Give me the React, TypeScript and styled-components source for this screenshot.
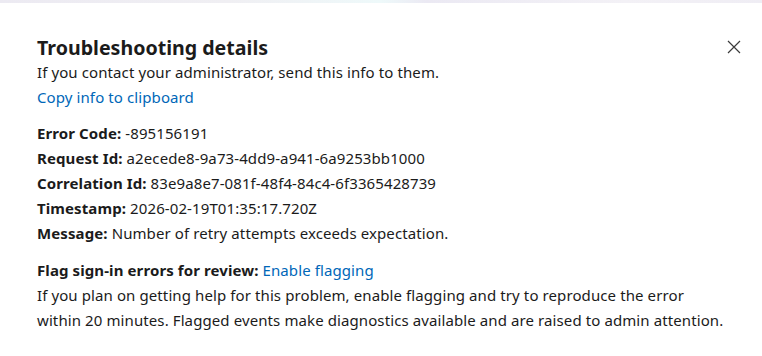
import * as React from 'react';
import styled, { createGlobalStyle } from 'styled-components';

const GlobalStyle = createGlobalStyle`
  html, body {
    margin: 0;
    padding: 0;
    background: #ffffff;
  }
  body {
    font-family: "Noto Sans", "Open Sans", sans-serif;
    color: #1b1b1b;
  }
`;

const TopStrip = styled.div`
  height: 3px;
  background: linear-gradient(90deg, #eceaf2 0%, #f0eff3 30%, #eef9fa 50%, #ebe9f3 56%, #f3f1f6 82%, #efedf4 100%);
`;

const Panel = styled.section`
  position: relative;
  padding: 33px 37px 20px 37px;
  font-size: 15px;
  letter-spacing: 0.1px;
  line-height: 25px;
`;

const Title = styled.h2`
  margin: 0;
  font-size: 19.6px;
  font-weight: 700;
  letter-spacing: 0;
  line-height: 24px;
  color: #1b1b1b;
`;

const Line = styled.div`
  white-space: nowrap;
`;

const Link = styled.a`
  color: #0067b8;
  text-decoration: none;
  cursor: pointer;
`;

const Details = styled.div<{ $gap: number }>`
  margin-top: ${p => p.$gap}px;
`;

const Label = styled.span`
  font-weight: 700;
`;

const CloseButton = styled.button`
  position: absolute;
  top: 34px;
  right: 18px;
  width: 20px;
  height: 20px;
  padding: 0;
  border: none;
  background: transparent;
  display: flex;
  align-items: center;
  justify-content: center;
  cursor: pointer;
`;

const rows: [string, string][] = [
  ['Error Code:', '-895156191'],
  ['Request Id:', 'a2ecede8-9a73-4dd9-a941-6a9253bb1000'],
  ['Correlation Id:', '83e9a8e7-081f-48f4-84c4-6f3365428739'],
  ['Timestamp:', '2026-02-19T01:35:17.720Z'],
  ['Message:', 'Number of retry attempts exceeds expectation.'],
];

export default function App() {
  return (
    <>
      <GlobalStyle />
      <TopStrip />
      <Panel>
        <CloseButton aria-label="Close">
          <svg width="14" height="14" viewBox="0 0 14 14">
            <path d="M1 1 L13 13 M13 1 L1 13" stroke="#3b3b3b" strokeWidth="1.2" fill="none" />
          </svg>
        </CloseButton>
        <Title>Troubleshooting details</Title>
        <Line>If you contact your administrator, send this info to them.</Line>
        <Line>
          <Link>Copy info to clipboard</Link>
        </Line>
        <Details $gap={11}>
          {rows.map(([k, v]) => (
            <Line key={k}>
              <Label>{k}</Label> {v}
            </Line>
          ))}
        </Details>
        <Details $gap={12}>
          <Line>
            <Label>Flag sign-in errors for review:</Label> <Link>Enable flagging</Link>
          </Line>
          <Line>If you plan on getting help for this problem, enable flagging and try to reproduce the error</Line>
          <Line>within 20 minutes. Flagged events make diagnostics available and are raised to admin attention.</Line>
        </Details>
      </Panel>
    </>
  );
}
